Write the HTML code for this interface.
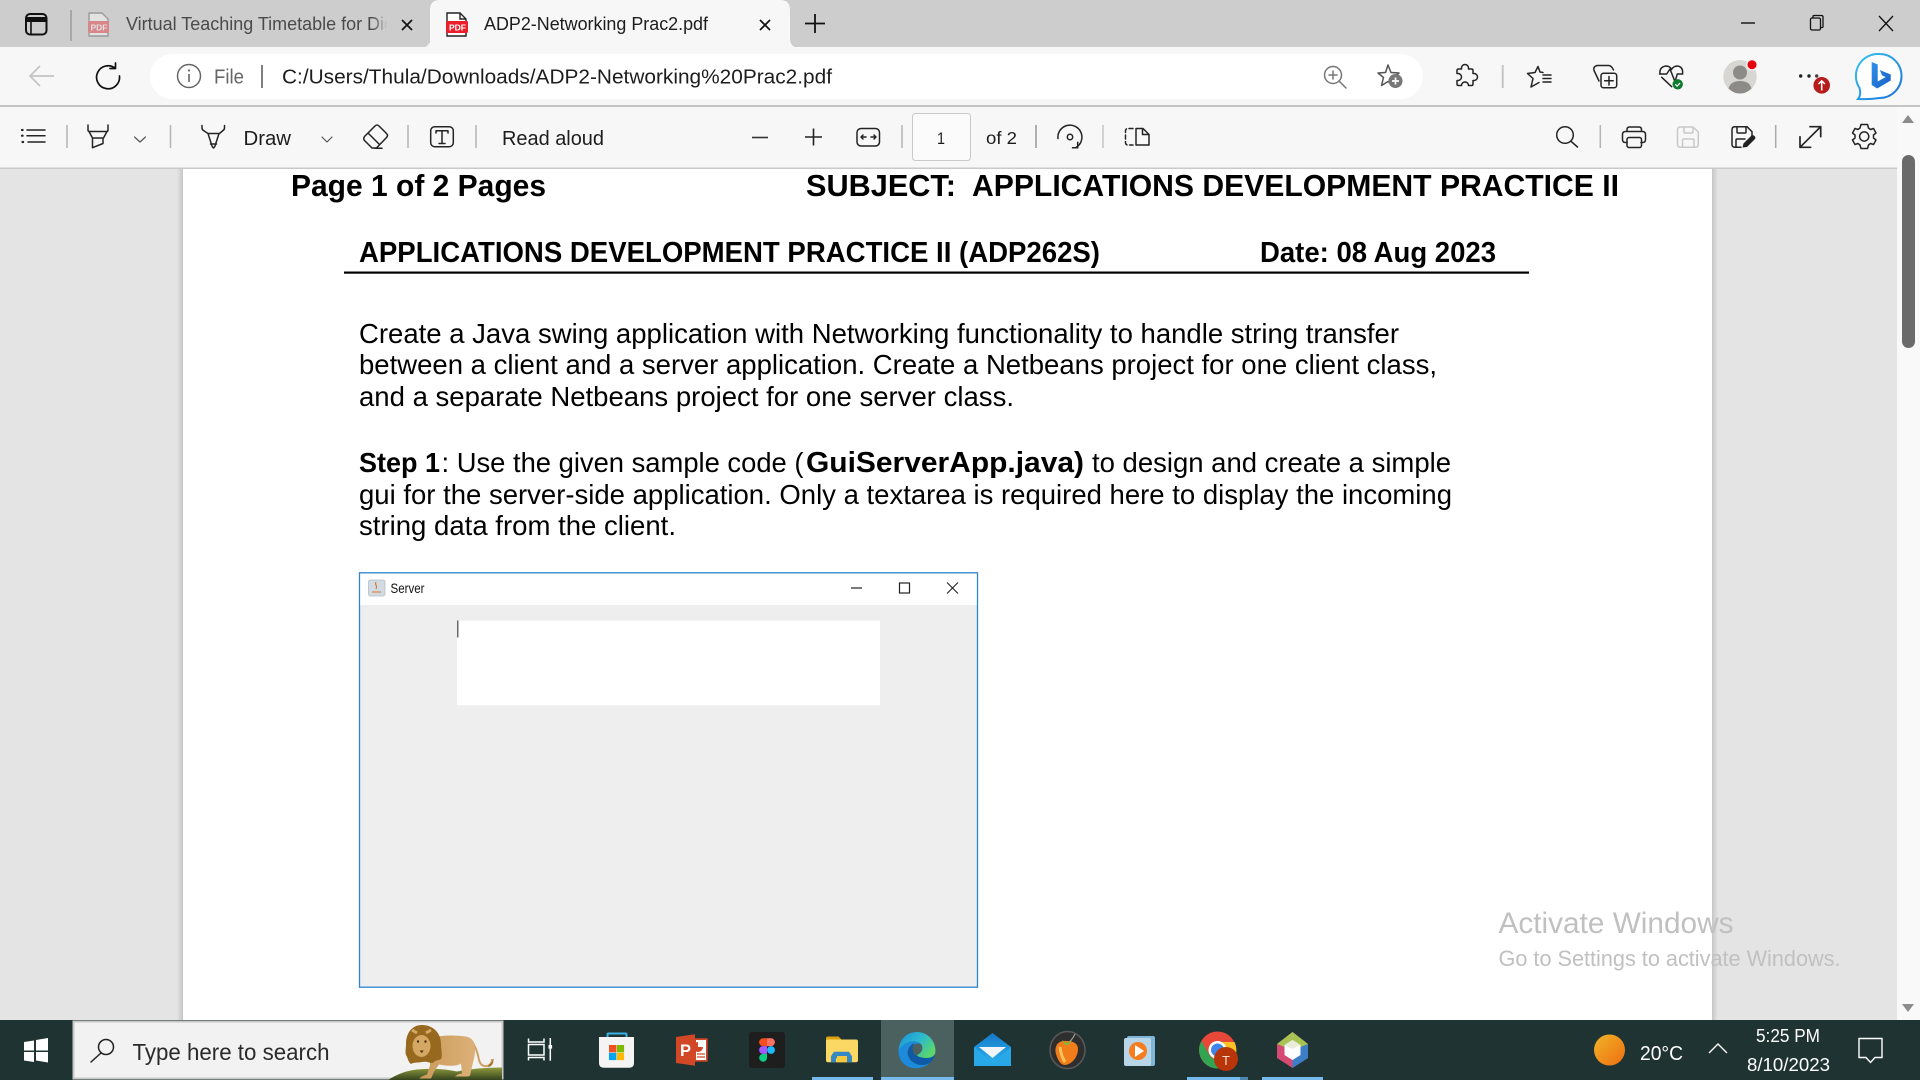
<!DOCTYPE html>
<html lang="en"><head><meta charset="utf-8"><title>ADP2-Networking Prac2.pdf</title>
<style>
html,body{margin:0;padding:0;width:1920px;height:1080px;overflow:hidden;background:#e4e4e4}
svg{position:absolute;left:0;top:0;display:block}
text{font-family:"Liberation Sans",Arial,sans-serif;white-space:pre}
.ui{font-size:20px;fill:#1d1d1d}
.doc{font-size:27.5px;fill:#000}
.b{font-weight:bold}
.i{fill:none;stroke:#242424;stroke-width:1.5;stroke-linecap:round;stroke-linejoin:round}
.s{stroke:#b4b4b4;stroke-width:1.5}
</style></head><body>
<svg width="1920" height="1080" viewBox="0 0 1920 1080" xmlns="http://www.w3.org/2000/svg">
<defs>
<linearGradient id="fade" x1="0" x2="1"><stop offset="0" stop-color="#cdcdcd" stop-opacity="0"/><stop offset="1" stop-color="#cdcdcd"/></linearGradient>
<linearGradient id="shL" x1="0" x2="1"><stop offset="0" stop-color="#e4e4e4"/><stop offset="1" stop-color="#c6c6c6"/></linearGradient>
<linearGradient id="shR" x1="0" x2="1"><stop offset="0" stop-color="#c6c6c6"/><stop offset="1" stop-color="#e4e4e4"/></linearGradient>
<linearGradient id="sun" x1="0" x2="1" y1="0" y2="1"><stop offset="0" stop-color="#f0b528"/><stop offset="1" stop-color="#ee6d10"/></linearGradient>
<linearGradient id="edge" x1="0" x2="1" y1="0" y2=".6"><stop offset="0" stop-color="#1b8fd8"/><stop offset=".55" stop-color="#2cb9d0"/><stop offset="1" stop-color="#5ad66c"/></linearGradient>
<linearGradient id="bing" x1="0" x2="1" y1="0" y2="1"><stop offset="0" stop-color="#2f8fe8"/><stop offset="1" stop-color="#1560c8"/></linearGradient>
<linearGradient id="bub" x1="0" x2="1" y1="0" y2="1"><stop offset="0" stop-color="#35c4f0"/><stop offset="1" stop-color="#1a72dc"/></linearGradient>
<linearGradient id="hill" x1="0" x2="0" y1="0" y2="1"><stop offset="0" stop-color="#8f9c3c"/><stop offset="1" stop-color="#33421e"/></linearGradient>
<linearGradient id="mail" x1="0" x2="0" y1="0" y2="1"><stop offset="0" stop-color="#1578c8"/><stop offset="1" stop-color="#2cb6ef"/></linearGradient>
<linearGradient id="lion" x1="0" x2="1"><stop offset="0" stop-color="#c99a58"/><stop offset="1" stop-color="#dcb078"/></linearGradient>
</defs>

<!-- PDF viewport -->
<rect x="0" y="169" width="1920" height="851" fill="#e4e4e4"/>
<rect x="177" y="169" width="6" height="851" fill="url(#shL)"/>
<rect x="1712" y="169" width="6" height="851" fill="url(#shR)"/>
<rect x="183" y="169" width="1529" height="851" fill="#fff"/>
<rect x="1897" y="107" width="23" height="913" fill="#f9f9f9"/>
<rect x="1902" y="155" width="13" height="193" rx="6.5" fill="#6a6a6a"/>
<path d="M1902 123l6-8 6 8z" fill="#8c8c8c"/>
<path d="M1902 1004l6 8 6-8z" fill="#8c8c8c"/>

<!-- Document -->
<text class="doc b" x="291" y="196" style="font-size:31px" textLength="255" lengthAdjust="spacingAndGlyphs">Page 1 of 2 Pages</text>
<text class="doc b" x="806" y="196" style="font-size:31px" textLength="150" lengthAdjust="spacingAndGlyphs">SUBJECT:</text>
<text class="doc b" x="972" y="196" style="font-size:31px" textLength="647" lengthAdjust="spacingAndGlyphs">APPLICATIONS DEVELOPMENT PRACTICE II</text>
<text class="doc b" x="359" y="262" style="font-size:28.5px" textLength="741" lengthAdjust="spacingAndGlyphs">APPLICATIONS DEVELOPMENT PRACTICE II (ADP262S)</text>
<text class="doc b" x="1260" y="262" style="font-size:28.5px" textLength="236" lengthAdjust="spacingAndGlyphs">Date: 08 Aug 2023</text>
<rect x="344" y="271.5" width="1185" height="2.2" fill="#000"/>
<text class="doc" x="359" y="343" textLength="1040" lengthAdjust="spacingAndGlyphs">Create a Java swing application with Networking functionality to handle string transfer</text>
<text class="doc" x="359" y="374" textLength="1078" lengthAdjust="spacingAndGlyphs">between a client and a server application. Create a Netbeans project for one client class,</text>
<text class="doc" x="359" y="406" textLength="655" lengthAdjust="spacingAndGlyphs">and a separate Netbeans project for one server class.</text>
<text class="doc b" x="359" y="472" textLength="81" lengthAdjust="spacingAndGlyphs">Step 1</text>
<text class="doc" x="441.5" y="472" textLength="362" lengthAdjust="spacingAndGlyphs">: Use the given sample code (</text>
<text class="doc b" x="806" y="472" style="font-size:29px" textLength="278" lengthAdjust="spacingAndGlyphs">GuiServerApp.java)</text>
<text class="doc" x="1092" y="472" textLength="359" lengthAdjust="spacingAndGlyphs">to design and create a simple</text>
<text class="doc" x="359" y="504" textLength="1093" lengthAdjust="spacingAndGlyphs">gui for the server-side application. Only a textarea is required here to display the incoming</text>
<text class="doc" x="359" y="535" textLength="317" lengthAdjust="spacingAndGlyphs">string data from the client.</text>

<!-- Embedded Server window -->
<rect x="359.5" y="572.8" width="618" height="414.4" fill="#eeeeee" stroke="#2b86d4" stroke-width="1.3"/>
<rect x="360.3" y="573.6" width="616.4" height="31.4" fill="#fff"/>
<rect x="368.5" y="580" width="16.5" height="16" rx="2" fill="#d2dae2" stroke="#b4bec8" stroke-width=".8"/>
<path d="M372 592h9M376 582c-2 3 2 3 0 7" fill="none" stroke="#d87830" stroke-width="1.1"/>
<text x="390.5" y="593" style="font-size:13.5px" fill="#111" textLength="34" lengthAdjust="spacingAndGlyphs">Server</text>
<path d="M851 588h11" stroke="#222" stroke-width="1.2"/>
<rect x="899.5" y="583" width="10" height="10" fill="none" stroke="#222" stroke-width="1.2"/>
<path d="M947 582.5l11 11M958 582.5l-11 11" stroke="#222" stroke-width="1.1"/>
<rect x="457" y="620.7" width="423" height="84.5" fill="#fff"/>
<rect x="457.2" y="620.5" width="1.2" height="17" fill="#444"/>

<!-- Activate Windows -->
<text x="1498.5" y="933" style="font-size:29.5px" fill="#c0c0c0" textLength="235" lengthAdjust="spacingAndGlyphs">Activate Windows</text>
<text x="1498.5" y="966" style="font-size:22px" fill="#c0c0c0" textLength="342" lengthAdjust="spacingAndGlyphs">Go to Settings to activate Windows.</text>

<!-- Tab strip -->
<rect width="1920" height="48" fill="#cdcdcd"/>
<rect x="0" y="47" width="1920" height="60" fill="#f7f7f7"/>
<path d="M420 48q10 0 10-10V10q0-10 10-10h340q10 0 10 10v28q0 10 10 10z" fill="#f7f7f7"/>
<rect x="26" y="14" width="20.5" height="20.5" rx="4" fill="none" stroke="#111" stroke-width="2"/>
<path d="M26 19.5h20.5" stroke="#111" stroke-width="5"/><path d="M31 20v14" stroke="#111" stroke-width="1.6"/>
<path d="M71 10v31" stroke="#9a9a9a" stroke-width="1.5"/>
<g opacity=".42"><path d="M89 13h13l6 6v17H89z" fill="#fff" stroke="#555" stroke-width="1.4"/><rect x="88" y="21" width="21" height="12" rx="1.5" fill="#e8252e"/><text x="90.5" y="30.5" style="font-size:8.5px;font-weight:bold" fill="#fff">PDF</text></g>
<text x="126" y="30" class="ui" style="font-size:18.5px;fill:#4a4a4a" textLength="268" lengthAdjust="spacingAndGlyphs">Virtual Teaching Timetable for Dig</text>
<rect x="387" y="5" width="43" height="38" fill="#cdcdcd"/>
<rect x="372" y="5" width="15" height="38" fill="url(#fade)"/>
<path d="M402 20l10 10M412 20l-10 10" stroke="#111" stroke-width="1.7"/>
<path d="M447 13h13l6 6v17h-19z" fill="#fff" stroke="#222" stroke-width="1.4"/><path d="M460 13v6h6" fill="none" stroke="#222" stroke-width="1.4"/>
<rect x="446" y="21" width="22" height="12" rx="1.5" fill="#ea1f2b"/><text x="449" y="30.5" style="font-size:8.5px;font-weight:bold" fill="#fff">PDF</text>
<text x="484" y="30" class="ui" style="font-size:18.5px" textLength="224" lengthAdjust="spacingAndGlyphs">ADP2-Networking Prac2.pdf</text>
<path d="M760 20l10 10M770 20l-10 10" stroke="#111" stroke-width="1.7"/>
<path d="M815 14v19M805 23.5h20" stroke="#111" stroke-width="1.8"/>
<path d="M1741 23h14" stroke="#111" stroke-width="1.4"/>
<rect x="1810.5" y="18" width="10" height="12" rx="1.5" fill="none" stroke="#111" stroke-width="1.3"/><path d="M1813 18v-1.5q0-1 1-1h7.5q1.500 0 1.500 1.500v9.500q0 1-1 1h-1.500" fill="none" stroke="#111" stroke-width="1.3"/>
<path d="M1879 16l14 15M1893 16l-14 15" stroke="#111" stroke-width="1.3"/>

<!-- Address row -->
<rect x="150" y="54" width="1273" height="45" rx="22.5" fill="#fff"/>
<path d="M54 76H30M40 66L30 76l10 10" fill="none" stroke="#c4c4c4" stroke-width="1.7"/>
<path class="i" style="stroke:#111;stroke-width:1.7" d="M115.500 68.500A11.500 11.500 0 1 0 119.500 76M115.500 63v5.500H110"/>
<circle class="i" style="stroke:#666;stroke-width:1.5" cx="189" cy="76" r="11.500"/><path d="M189 74v8" stroke="#666" stroke-width="1.6"/><circle cx="189" cy="70.500" r="1.100" fill="#666"/>
<text x="214" y="83.5" class="ui" style="font-size:20px;fill:#666" textLength="30" lengthAdjust="spacingAndGlyphs">File</text>
<path d="M262 65v23" stroke="#555" stroke-width="1.5"/>
<text x="282" y="83.5" class="ui" style="font-size:20.5px" textLength="550" lengthAdjust="spacingAndGlyphs">C:/Users/Thula/Downloads/ADP2-Networking%20Prac2.pdf</text>
<g class="i" style="stroke:#777;stroke-width:1.5"><circle cx="1333" cy="75" r="8.500"/><path d="M1339 81l7 7M1333 71v8M1329 75h8"/></g>
<path class="i" style="stroke:#555;stroke-width:1.5" d="M1388 65l3 7.500 8 .5-6 5 1.500 7.500-6.500-4-6.500 4 2-8-5.500-4.500 7.500-.5z"/>
<circle cx="1395.500" cy="81" r="7" fill="#777"/><path d="M1395.500 77.500v7M1392 81h7" stroke="#fff" stroke-width="1.7"/>
<path class="i" transform="translate(-1.500 -1)" d="M1460 70h3v-1a3.500 3.500 0 0 1 7 0v1h3q1.500 0 1.500 1.500v3h1a3.500 3.500 0 0 1 0 7h-1v3.500q0 1.500-1.500 1.500h-3a3.500 3.500 0 0 0-7 0h-3q-1.500 0-1.500-1.500v-3.500h1a3.500 3.500 0 0 0 0-7h-1v-3q0-1.500 1.500-1.500z"/>
<path d="M1502.700 65v23" stroke="#c4c4c4" stroke-width="2"/>
<path class="i" d="M1543 72.500l-3-.5-2-5.500-3 6-7.500 1 5.500 5-2 8.500 8-4.500M1543 75h8M1543 78.500h8M1543 82h8"/>
<g class="i"><rect x="1601" y="73.300" width="15.700" height="14.400" rx="2.500"/><path d="M1609 76.500v8.500M1604.700 80.700h8.500M1599 81l-5-10.500q-1-4 3-5h11.500q3 0 5 4.500"/></g>
<path class="i" d="M1660 74q-1-7 6-8 4 0 5.500 3.500 2-3.500 6-3.500 6 1 5 8M1659.500 74h7.200l3.300-5 5 12.700 2.300-7.700h5.400M1661.700 77.300l10 9.400"/>
<circle cx="1677.700" cy="84.300" r="5.200" fill="#0f7b2e"/><path d="M1675.300 84.300l1.800 1.800 3-3" fill="none" stroke="#fff" stroke-width="1.2"/>
<circle cx="1740" cy="76.700" r="16.700" fill="#d8d6d3"/><circle cx="1740" cy="72.500" r="7" fill="#8d8b88"/><path d="M1728.500 88.500q2-7.500 11.500-7.500t11.500 7.500q-5 5-11.500 5t-11.500-5z" fill="#8d8b88"/>
<circle cx="1752" cy="64.700" r="6" fill="#f0efed"/><circle cx="1752" cy="64.700" r="4.500" fill="#e4000f"/>
<circle cx="1800.700" cy="76" r="1.700" fill="#222"/><circle cx="1809" cy="76" r="1.700" fill="#222"/><circle cx="1816.700" cy="76" r="1.700" fill="#444"/>
<circle cx="1821.700" cy="85.300" r="8.300" fill="#b71c1c"/><path d="M1821.700 90.500v-9.500M1818.500 84l3.200-3.200 3.200 3.200" fill="none" stroke="#fff" stroke-width="1.5"/>
<path d="M1879.500 54a22 22 0 0 1 0 44q-10 1.500-21.500 1 3.500-4 1.500-11a22 22 0 0 1 20-34z" fill="#fff" stroke="url(#bub)" stroke-width="2"/>
<path d="M1871.700 62l6 2.500v17l8-4.500-3.500-1.500-2.500-5.500 11 4.500v6l-13.500 8-5.500-3.500z" fill="url(#bing)"/>

<!-- Rows separators -->
<rect x="0" y="105" width="1920" height="2" fill="#c4c4c4"/>
<rect x="0" y="107" width="1897" height="61" fill="#f7f7f7"/>
<rect x="0" y="167.5" width="1897" height="1.5" fill="#c9c9c9"/>

<!-- PDF toolbar -->
<g class="i"><path d="M27 130h18M27 135.700h18M28 142h17"/><path d="M22 130h.6M22 135.700h.6M22.500 142h.6" style="stroke-width:2.200"/></g>
<path class="s" d="M67 125v23"/>
<path class="i" d="M88 125v5q0 1.500 1.500 1.500h17q1.500 0 1.500-1.500v-5M89 131.500l3.500 6.500h11l3.500-6.500M92.500 138v9.700l10.500-4.200v-5.500"/>
<path class="i" style="stroke:#555;stroke-width:1.2" d="M134.500 137l5.500 5 5.500-5"/>
<path class="s" d="M170.500 125v23"/>
<path class="i" d="M202 125.500v2.500q0 1.500 1.500 2.500l4.500 3h11.500l3.500-3q1.500-1 1.500-2.500v-2.500M208 133.500l4 12.500q1 2 1.500 2t1.500-2l4-12.500M210.500 144h6"/>
<text x="243.500" y="145" class="ui" style="font-size:20.500px" textLength="47.500" lengthAdjust="spacingAndGlyphs">Draw</text>
<path class="i" style="stroke:#555;stroke-width:1.2" d="M322 137l5 5 5-5"/>
<path class="i" d="M364.500 136.500l10.500-10.500q2-2 4 0l7.500 7.500q2 2 0 4l-10 10.500h-4.500l-7.500-7.500q-1.500-1.500 0-4zM368 133l11.500 11.500M375 148.300h7"/>
<path class="s" d="M408 125v23"/>
<g class="i"><rect x="430.700" y="126.700" width="22.600" height="20" rx="4"/><path d="M436 133v-2.300h12v2.300M442 131v12.300M439 143.500h6"/></g>
<path class="s" d="M476 125v23"/>
<text x="502" y="145" class="ui" style="font-size:20.500px" textLength="102" lengthAdjust="spacingAndGlyphs">Read aloud</text>
<path d="M752 137.500h16" stroke="#333" stroke-width="1.6"/>
<path d="M805 137h17M813.500 128.500v17" stroke="#222" stroke-width="1.6"/>
<g class="i"><rect x="857" y="128.500" width="22.500" height="17.500" rx="4"/><path d="M861 137h5M871 137h5M863 135l-2 2 2 2M874 135l2 2-2 2"/></g>
<path class="s" d="M902 125v23"/>
<rect x="912.500" y="113.500" width="58" height="47" rx="3" fill="#fbfbfb" stroke="#c9c9c9"/>
<text x="937" y="144" class="ui" style="font-size:17px" textLength="8" lengthAdjust="spacingAndGlyphs">1</text>
<text x="986" y="144" class="ui" style="font-size:17.500px" textLength="31" lengthAdjust="spacingAndGlyphs">of 2</text>
<path class="s" style="stroke:#999" d="M1036 125v23"/>
<g class="i"><path d="M1058 138.500A12 12 0 1 1 1076 147.500M1072.500 147.700h5.200v-5.500"/><circle cx="1070" cy="137" r="2.700"/></g>
<path class="s" style="stroke:#c4c4c4" d="M1103 125v23"/>
<g class="i"><path d="M1133 128.500h-5q-2.500 0-2.500 2.500v11.500q0 2.500 2.500 2.500h5" stroke-dasharray="4 2.500"/><path d="M1136 128.500h7l6 6v10.500h-13zM1142.500 128.500v6h6.500"/></g>
<g class="i"><circle cx="1565" cy="135" r="8.300"/><path d="M1571 141.300l6.500 5.700"/></g>
<path class="s" d="M1600.300 125v23"/>
<g class="i"><path d="M1627 131.500v-2q0-2.500 2.500-2.500h9.500q2.500 0 2.500 2.500v2M1627 142.500h-1.500q-3 0-3-3v-5q0-3 3-3h17q3 0 3 3v5q0 3-3 3h-1.500"/><rect x="1627" y="137.500" width="14.500" height="10" rx="2"/></g>
<path class="i" style="stroke:#c8c8c8" d="M1680.500 127h12.500l5.300 5v12.300q0 3-3 3h-14.800q-3 0-3-3v-14.300q0-3 3-3zM1684 127v5q0 1 1 1h7q1 0 1-1v-5M1682.500 147v-7q0-1 1-1h9.500q1 0 1 1v7"/>
<path class="i" d="M1741 147.300h-6q-3 0-3-3v-14.600q0-3 3-3h12l5 5v4M1737 127v5q0 1 1 1h7q1 0 1-1v-5M1736 147v-7q0-1 1-1h8"/>
<path d="M1742.500 147.500l1-4 8-8q1.500-1 3 .5t.5 3l-8 8z" fill="#222"/>
<path class="s" style="stroke:#aaa" d="M1775.700 125v23"/>
<path class="i" style="stroke-width:1.700" d="M1820.700 126.700l-20.700 20.600M1810 126.700h10.700v10M1800 136.700v10.600h10.700"/>
<g class="i"><circle cx="1864.200" cy="136.500" r="4.600"/><path d="M1861 124.500h6.500l1 3.500 2 1.500 3-1 2.500 4.500-2.500 2v3l2.500 2-2.500 4.500-3-1-2 1.500-1 3.500h-6.500l-1-3.500-2-1.500-3 1-2.500-4.500 2.500-2v-3l-2.500-2 2.500-4.500 3 1 2-1.500z"/></g>

<!-- Taskbar -->
<rect x="0" y="1020" width="1920" height="60" fill="#1f3332"/>
<path d="M24 1042l10-1.500v10H24zM36 1040l12-2v12.500H36zM24 1052h10v10l-10-1.500zM36 1052h12v10.500l-12-2z" fill="#fff"/>
<rect x="73.500" y="1021.500" width="429" height="57" fill="#f2f2f2" stroke="#c8c8c8" stroke-width="2"/>
<g class="i" style="stroke:#222"><circle cx="106" cy="1047" r="7.500"/><path d="M101 1053l-10 9"/></g>
<text x="132.500" y="1060" class="ui" style="font-size:23px;fill:#2b2b2b" textLength="197" lengthAdjust="spacingAndGlyphs">Type here to search</text>
<!-- lion -->
<path d="M388 1080q14-9 29-10.500 22-2 40 2 20-4 45-4v12.500z" fill="url(#hill)"/>
<path d="M471 1040q6 8 8 20 2 7 8 6 5-1 5-7" fill="none" stroke="#cfa060" stroke-width="2"/>
<path d="M488 1067q6-1 5.500-9-1 5-5 7z" fill="#a2702c"/>
<path d="M430 1038q16-4 36-1.500 9 2 9 12 0 8-2 14l-3 13q-1 1-3 1h-12q3-3 7-3l-1-10q-6 4-22 1l-5 7q-2 5-3 7h-12q4-3 8-4l3-9q0-10 0-28z" fill="url(#lion)"/>
<path d="M422 1025c11 0 19 8 19 19 0 6 2 12 0 15-4 2-6 1-8 4-4 0-6-2-11-1-5 1-8 0-11 2-3-2-3-6-5-9-1-3 0-7 0-11 0-11 6-19 16-19z" fill="#97691f"/>
<ellipse cx="421.500" cy="1046" rx="9" ry="11" fill="#d4a762"/>
<path d="M417 1041.500h2M424.500 1041.500h2" stroke="#3a220c" stroke-width="2"/><path d="M419.700 1050.500h4l-2 2.500z" fill="#4a2c12"/>
<path d="M412 1030l5 3M431 1030l-5 3" stroke="#d4a762" stroke-width="3"/>
<!-- task view -->
<g fill="none" stroke="#fff" stroke-width="1.500"><path d="M528.500 1038.500v3.500h15.500v-3.500M528.500 1044.500h15.500v10.500h-15.500zM528.500 1060.500v-3h15.500v3M550.300 1038v22.700"/></g>
<rect x="548.500" y="1045" width="3.600" height="3.600" fill="#fff"/>
<!-- store -->
<path d="M607.500 1039v-4.500q0-1 1-1h17q1 0 1 1v4.500" fill="none" stroke="#3bb0e6" stroke-width="2"/>
<path d="M599 1037h35v26q0 4.700-4.700 4.700h-25.600q-4.700 0-4.700-4.700z" fill="#f4f4f4"/>
<rect x="609" y="1045" width="7.300" height="7.300" fill="#f25022"/><rect x="616.800" y="1045" width="7.300" height="7.300" fill="#7fba00"/><rect x="609" y="1052.800" width="7.300" height="7.300" fill="#00a4ef"/><rect x="616.800" y="1052.800" width="7.300" height="7.300" fill="#ffb900"/>
<!-- powerpoint -->
<rect x="694" y="1038.300" width="13.700" height="23.400" fill="#d24726"/><rect x="696" y="1040" width="10" height="20" fill="#fff"/>
<path d="M698 1042a5 5 0 1 0 5 5h-5z" fill="#d24726"/><path d="M697 1054h8M697 1057h8" stroke="#d24726" stroke-width="1.200"/>
<path d="M676 1037l19-2.700v31.400l-19-2.700z" fill="#d24726"/>
<text x="680" y="1056" style="font-size:16.500px;font-weight:bold" fill="#fff">P</text>
<!-- figma -->
<rect x="749" y="1032" width="36" height="36" rx="3" fill="#1e1e1e"/>
<path d="M767 1038.300h-4a3.900 3.900 0 0 0 0 7.800h4z" fill="#f24e1e"/><path d="M767 1038.300h4a3.900 3.900 0 0 1 0 7.800h-4z" fill="#ff7262"/><path d="M767 1046.100h-4a3.900 3.900 0 0 0 0 7.800h4z" fill="#a259ff"/><circle cx="771" cy="1050" r="3.900" fill="#1abcfe"/><path d="M767 1053.900h-4a3.900 3.900 0 1 0 4 4z" fill="#0acf83"/>
<!-- explorer -->
<path d="M826 1038.500q0-2 2-2h10.500l4 4H826z" fill="#dca30f"/>
<path d="M826 1041q0-1.500 1.500-1.500h28.500q2 0 2 2v18.800q0 2-2 2h-28q-2 0-2-2z" fill="#fbd764"/>
<path d="M831 1062.300v-6l3-4.500h15l3 4.500v6h-5v-4h-11v4z" fill="#3488c4"/>
<rect x="837" y="1056" width="10" height="6.300" fill="#f3c93e"/>
<rect x="812" y="1077" width="61" height="3" fill="#76b9ed"/>
<!-- edge -->
<rect x="881" y="1020" width="73" height="60" fill="#4a615f"/>
<rect x="881" y="1077" width="73" height="3" fill="#76b9ed"/>
<path d="M898.500 1050C900 1036 910 1032 917 1032 928 1032 935.500 1041 935.500 1051 935.500 1056 931 1058 927 1058 922 1058 918 1057 917 1055 922 1053 924 1048 921 1044 916 1039 905 1041 898.500 1050z" fill="url(#edge)"/>
<path d="M898.500 1050C905 1041 916 1039 921 1044 912 1042 906 1048 908 1055 910 1063 920 1068 930 1063 925 1067 920 1068.300 916 1068.300 905 1068 898 1060 898.500 1050z" fill="#1d8bdc"/>
<path d="M930 1063C920 1068 910 1063 908 1055 907 1050 910 1045 914 1043 911 1049 913 1056 920 1057 926 1059 932 1058 935 1055 934 1059 932 1061 930 1063z" fill="#0f5aa6"/>
<!-- mail -->
<path d="M992.500 1033l18.500 14v19h-37v-19z" fill="url(#mail)"/><path d="M979 1047h27l-13.500 11z" fill="#f2f5f8"/><path d="M974 1047l18.500 16 18.500-16v19h-37z" fill="#29a8e8"/>
<!-- fl -->
<ellipse cx="1067.500" cy="1050" rx="17.500" ry="18.500" fill="#2e2e2e" stroke="#5a5a5a" stroke-width="1.500"/>
<path d="M1067 1041c-9-1-13 5-11 13 2 7 5 11 9 11 8-1 13-9 13-16 0-5-4-8-11-8z" fill="#f07c1a"/><path d="M1068 1043c3-2 5-5 7-9" stroke="#9a9a9a" stroke-width="1.300" fill="none"/><path d="M1062 1040l5 3 5-3-3 5h-4z" fill="#8fb03c"/><path d="M1060 1047q1 9 5 15" stroke="#fbc25a" stroke-width="3" fill="none"/>
<!-- media -->
<rect x="1127" y="1036" width="28" height="30" rx="2" fill="#7fb5d6"/><rect x="1124" y="1038" width="27" height="28" rx="2" fill="#b9d6e8"/><circle cx="1138" cy="1051" r="9" fill="#f57d20"/><path d="M1135 1045l9 6-9 6z" fill="#fff"/>
<!-- chrome -->
<circle cx="1217.500" cy="1050" r="18.500" fill="#e8483a"/><path d="M1217.500 1068.500a18.500 18.500 0 0 1-16-27.500l9 16 16 10q-4 1.500-9 1.500z" fill="#31a552"/><path d="M1217.500 1042h17a18.500 18.500 0 0 1-1 18z" fill="#fbc227"/><circle cx="1217.500" cy="1050" r="9" fill="#fff"/><circle cx="1217.500" cy="1050" r="6.500" fill="#3f86ec"/>
<circle cx="1226" cy="1059" r="12" fill="#b73509"/><text x="1222" y="1065" style="font-size:13px" fill="#f3d7c8">T</text>
<rect x="1187" y="1077" width="53" height="3" fill="#76b9ed"/><rect x="1240" y="1077" width="8" height="3" fill="#4f86ad"/>
<!-- bean -->
<path d="M1292.500 1032l15.500 12v14l-15.500 10-15.500-10v-14z" fill="#d44a72"/><path d="M1292.500 1050l15.500-6v14l-15.500 10z" fill="#3d7fc6"/><path d="M1292.500 1032l15.500 12-15.500 6-15.500-6z" fill="#a8c353"/><path d="M1292.500 1040l8 5v10l-8 5-8-5v-10z" fill="#fff"/><path d="M1292.500 1040l8 5-8 4-8-4z" fill="#e9ecd8"/>
<rect x="1262" y="1077" width="61" height="3" fill="#76b9ed"/>
<!-- tray -->
<ellipse cx="1609.500" cy="1050" rx="15.500" ry="15.500" fill="url(#sun)"/>
<text x="1640" y="1060" style="font-size:20px" fill="#fff" textLength="43" lengthAdjust="spacingAndGlyphs">20°C</text>
<path d="M1709 1053l9-9 9 9" fill="none" stroke="#fff" stroke-width="1.400"/>
<text x="1756" y="1042" style="font-size:18px" fill="#fff" textLength="64" lengthAdjust="spacingAndGlyphs">5:25 PM</text>
<text x="1747" y="1071" style="font-size:18px" fill="#fff" textLength="83" lengthAdjust="spacingAndGlyphs">8/10/2023</text>
<path d="M1859 1038.500h23v19h-7l-4.500 5-4.500-5h-7z" fill="none" stroke="#fff" stroke-width="1.400"/>
</svg>
</body></html>
